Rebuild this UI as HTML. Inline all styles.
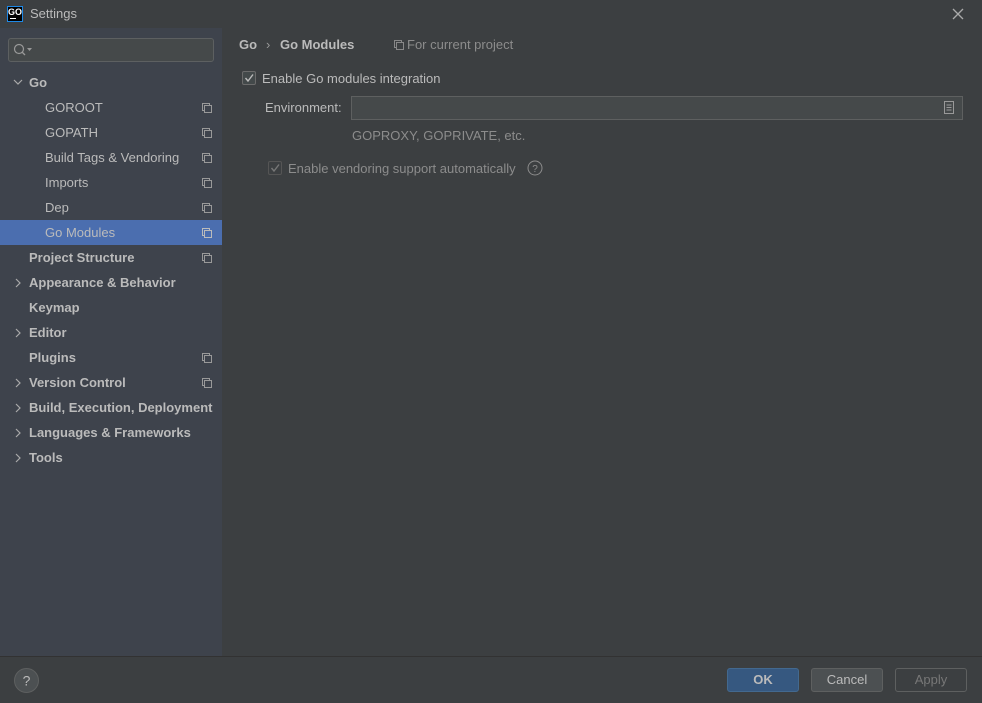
<!DOCTYPE html>
<html><head><meta charset="utf-8"><style>
*{margin:0;padding:0;box-sizing:border-box}
body{width:982px;height:703px;background:#3c3f41;font-family:"Liberation Sans",sans-serif;font-size:13px;color:#bbbbbb;position:relative;overflow:hidden}
.abs{position:absolute}
.title{left:0;top:0;width:982px;height:28px;background:#3c3f41}
.side{left:0;top:28px;width:222px;height:628px;background:#3e434c}
.item{position:absolute;left:0;width:222px;height:25px;line-height:25px;white-space:nowrap}
.b{font-weight:bold}
.cp{position:absolute;left:202px;top:8px}
.foot{left:0;top:656px;width:982px;height:47px;background:#3c3f41;border-top:1px solid #323232}
.btn{position:absolute;top:668px;height:24px;width:72px;border:1px solid #5e6060;border-radius:3px;text-align:center;line-height:22px;background:#4c5052}
</style></head><body>
<div class="abs title"></div>
<div class="abs" style="left:7px;top:6px;width:16px;height:16px;background:#000;border:1px solid #1e88e5;color:#fff;font-size:9px;font-weight:bold;line-height:10px;text-align:center">GO<div style="width:6px;height:1px;background:#fff;margin:1px 0 0 2px"></div></div>
<div class="abs" style="left:30px;top:6px;font-size:13px">Settings</div>
<svg class="abs" style="left:952px;top:8px" width="12" height="12"><path d="M1 1L11 11M11 1L1 11" stroke="#aaa" stroke-width="1.3"/></svg>
<div class="abs side"></div>
<div class="abs" style="left:8px;top:38px;width:206px;height:24px;border:1px solid #5d6061;border-radius:3px;background:#45494a"></div>
<svg class="abs" style="left:13px;top:43px" width="20" height="14"><circle cx="6" cy="6" r="4.5" stroke="#999" fill="none" stroke-width="1.2"/><path d="M9 9L12 12" stroke="#999" stroke-width="1.3"/><path d="M14 5h5l-2.5 3z" fill="#999"/></svg>
<div class="item" style="top:70px"><svg class="abs" style="left:13px;top:9px" width="10" height="7"><path d="M1 1L5 5L9 1" stroke="#aaa" fill="none" stroke-width="1.2"/></svg><span class="b" style="margin-left:29px">Go</span></div>
<div class="item" style="top:95px"><span style="margin-left:45px">GOROOT</span><svg class="cp" width="10" height="10"><rect x="0.5" y="0.5" width="7" height="7" fill="none" stroke="#999"/><rect x="2.5" y="2.5" width="7" height="7" fill="#3e434c" stroke="#999"/></svg></div>
<div class="item" style="top:120px"><span style="margin-left:45px">GOPATH</span><svg class="cp" width="10" height="10"><rect x="0.5" y="0.5" width="7" height="7" fill="none" stroke="#999"/><rect x="2.5" y="2.5" width="7" height="7" fill="#3e434c" stroke="#999"/></svg></div>
<div class="item" style="top:145px"><span style="margin-left:45px">Build Tags &amp; Vendoring</span><svg class="cp" width="10" height="10"><rect x="0.5" y="0.5" width="7" height="7" fill="none" stroke="#999"/><rect x="2.5" y="2.5" width="7" height="7" fill="#3e434c" stroke="#999"/></svg></div>
<div class="item" style="top:170px"><span style="margin-left:45px">Imports</span><svg class="cp" width="10" height="10"><rect x="0.5" y="0.5" width="7" height="7" fill="none" stroke="#999"/><rect x="2.5" y="2.5" width="7" height="7" fill="#3e434c" stroke="#999"/></svg></div>
<div class="item" style="top:195px"><span style="margin-left:45px">Dep</span><svg class="cp" width="10" height="10"><rect x="0.5" y="0.5" width="7" height="7" fill="none" stroke="#999"/><rect x="2.5" y="2.5" width="7" height="7" fill="#3e434c" stroke="#999"/></svg></div>
<div class="item" style="top:220px;background:#4b6eaf;height:25px"><span style="margin-left:45px">Go Modules</span><svg class="cp" width="10" height="10"><rect x="0.5" y="0.5" width="7" height="7" fill="none" stroke="#bbb"/><rect x="2.5" y="2.5" width="7" height="7" fill="#4b6eaf" stroke="#bbb"/></svg></div>
<div class="item b" style="top:245px"><span style="margin-left:29px">Project Structure</span><svg class="cp" width="10" height="10"><rect x="0.5" y="0.5" width="7" height="7" fill="none" stroke="#999"/><rect x="2.5" y="2.5" width="7" height="7" fill="#3e434c" stroke="#999"/></svg></div>
<div class="item b" style="top:270px"><svg class="abs" style="left:15px;top:8px" width="7" height="10"><path d="M1 1L5 5L1 9" stroke="#aaa" fill="none" stroke-width="1.2"/></svg><span style="margin-left:29px">Appearance &amp; Behavior</span></div>
<div class="item b" style="top:295px"><span style="margin-left:29px">Keymap</span></div>
<div class="item b" style="top:320px"><svg class="abs" style="left:15px;top:8px" width="7" height="10"><path d="M1 1L5 5L1 9" stroke="#aaa" fill="none" stroke-width="1.2"/></svg><span style="margin-left:29px">Editor</span></div>
<div class="item b" style="top:345px"><span style="margin-left:29px">Plugins</span><svg class="cp" width="10" height="10"><rect x="0.5" y="0.5" width="7" height="7" fill="none" stroke="#999"/><rect x="2.5" y="2.5" width="7" height="7" fill="#3e434c" stroke="#999"/></svg></div>
<div class="item b" style="top:370px"><svg class="abs" style="left:15px;top:8px" width="7" height="10"><path d="M1 1L5 5L1 9" stroke="#aaa" fill="none" stroke-width="1.2"/></svg><span style="margin-left:29px">Version Control</span><svg class="cp" width="10" height="10"><rect x="0.5" y="0.5" width="7" height="7" fill="none" stroke="#999"/><rect x="2.5" y="2.5" width="7" height="7" fill="#3e434c" stroke="#999"/></svg></div>
<div class="item b" style="top:395px"><svg class="abs" style="left:15px;top:8px" width="7" height="10"><path d="M1 1L5 5L1 9" stroke="#aaa" fill="none" stroke-width="1.2"/></svg><span style="margin-left:29px">Build, Execution, Deployment</span></div>
<div class="item b" style="top:420px"><svg class="abs" style="left:15px;top:8px" width="7" height="10"><path d="M1 1L5 5L1 9" stroke="#aaa" fill="none" stroke-width="1.2"/></svg><span style="margin-left:29px">Languages &amp; Frameworks</span></div>
<div class="item b" style="top:445px"><svg class="abs" style="left:15px;top:8px" width="7" height="10"><path d="M1 1L5 5L1 9" stroke="#aaa" fill="none" stroke-width="1.2"/></svg><span style="margin-left:29px">Tools</span></div>

<div class="abs b" style="left:239px;top:37px">Go</div>
<div class="abs" style="left:266px;top:37px;color:#999">›</div>
<div class="abs b" style="left:280px;top:37px">Go Modules</div>
<svg class="abs" style="left:394px;top:40px" width="10" height="10"><rect x="0.5" y="0.5" width="7" height="7" fill="none" stroke="#888"/><rect x="2.5" y="2.5" width="7" height="7" fill="#3c3f41" stroke="#888"/></svg>
<div class="abs" style="left:407px;top:37px;color:#8c8c8c">For current project</div>

<div class="abs" style="left:242px;top:71px;width:14px;height:14px;border:1px solid #6b6b6b;border-radius:2px;background:#43494a"></div>
<svg class="abs" style="left:244px;top:73px" width="10" height="10"><path d="M1.5 5L4 8L9 1.5" stroke="#bbb" fill="none" stroke-width="1.4"/></svg>
<div class="abs" style="left:262px;top:71px">Enable Go modules integration</div>
<div class="abs" style="left:265px;top:100px">Environment:</div>
<div class="abs" style="left:351px;top:96px;width:612px;height:24px;border:1px solid #5e6060;background:#45494a"></div>
<svg class="abs" style="left:943px;top:101px" width="12" height="14"><rect x="1.5" y="0.5" width="9" height="12" fill="none" stroke="#999"/><path d="M3.5 4h5M3.5 6.5h5M3.5 9h5" stroke="#999"/></svg>
<div class="abs" style="left:352px;top:128px;color:#8c8c8c">GOPROXY, GOPRIVATE, etc.</div>
<div class="abs" style="left:268px;top:161px;width:14px;height:14px;border:1px solid #555;border-radius:2px;background:#3c3f41"></div>
<svg class="abs" style="left:270px;top:163px" width="10" height="10"><path d="M1.5 5L4 8L9 1.5" stroke="#777" fill="none" stroke-width="1.4"/></svg>
<div class="abs" style="left:288px;top:161px;color:#8c8c8c">Enable vendoring support automatically</div>
<svg class="abs" style="left:527px;top:160px" width="16" height="16"><circle cx="8" cy="8" r="7" fill="none" stroke="#8c8c8c"/><text x="8" y="12" text-anchor="middle" font-size="10" fill="#8c8c8c" font-family="Liberation Sans">?</text></svg>

<div class="abs foot"></div>
<svg class="abs" style="left:14px;top:668px" width="25" height="25"><circle cx="12.5" cy="12.5" r="12" fill="#4c5052" stroke="#5e6060"/><text x="12.5" y="17.5" text-anchor="middle" font-size="14" fill="#bbb" font-family="Liberation Sans">?</text></svg>
<div class="btn b" style="left:727px;background:#365880;border-color:#43698f;color:#bbb">OK</div>
<div class="btn" style="left:811px">Cancel</div>
<div class="btn" style="left:895px;background:#3c3f41;color:#777">Apply</div>
</body></html>
